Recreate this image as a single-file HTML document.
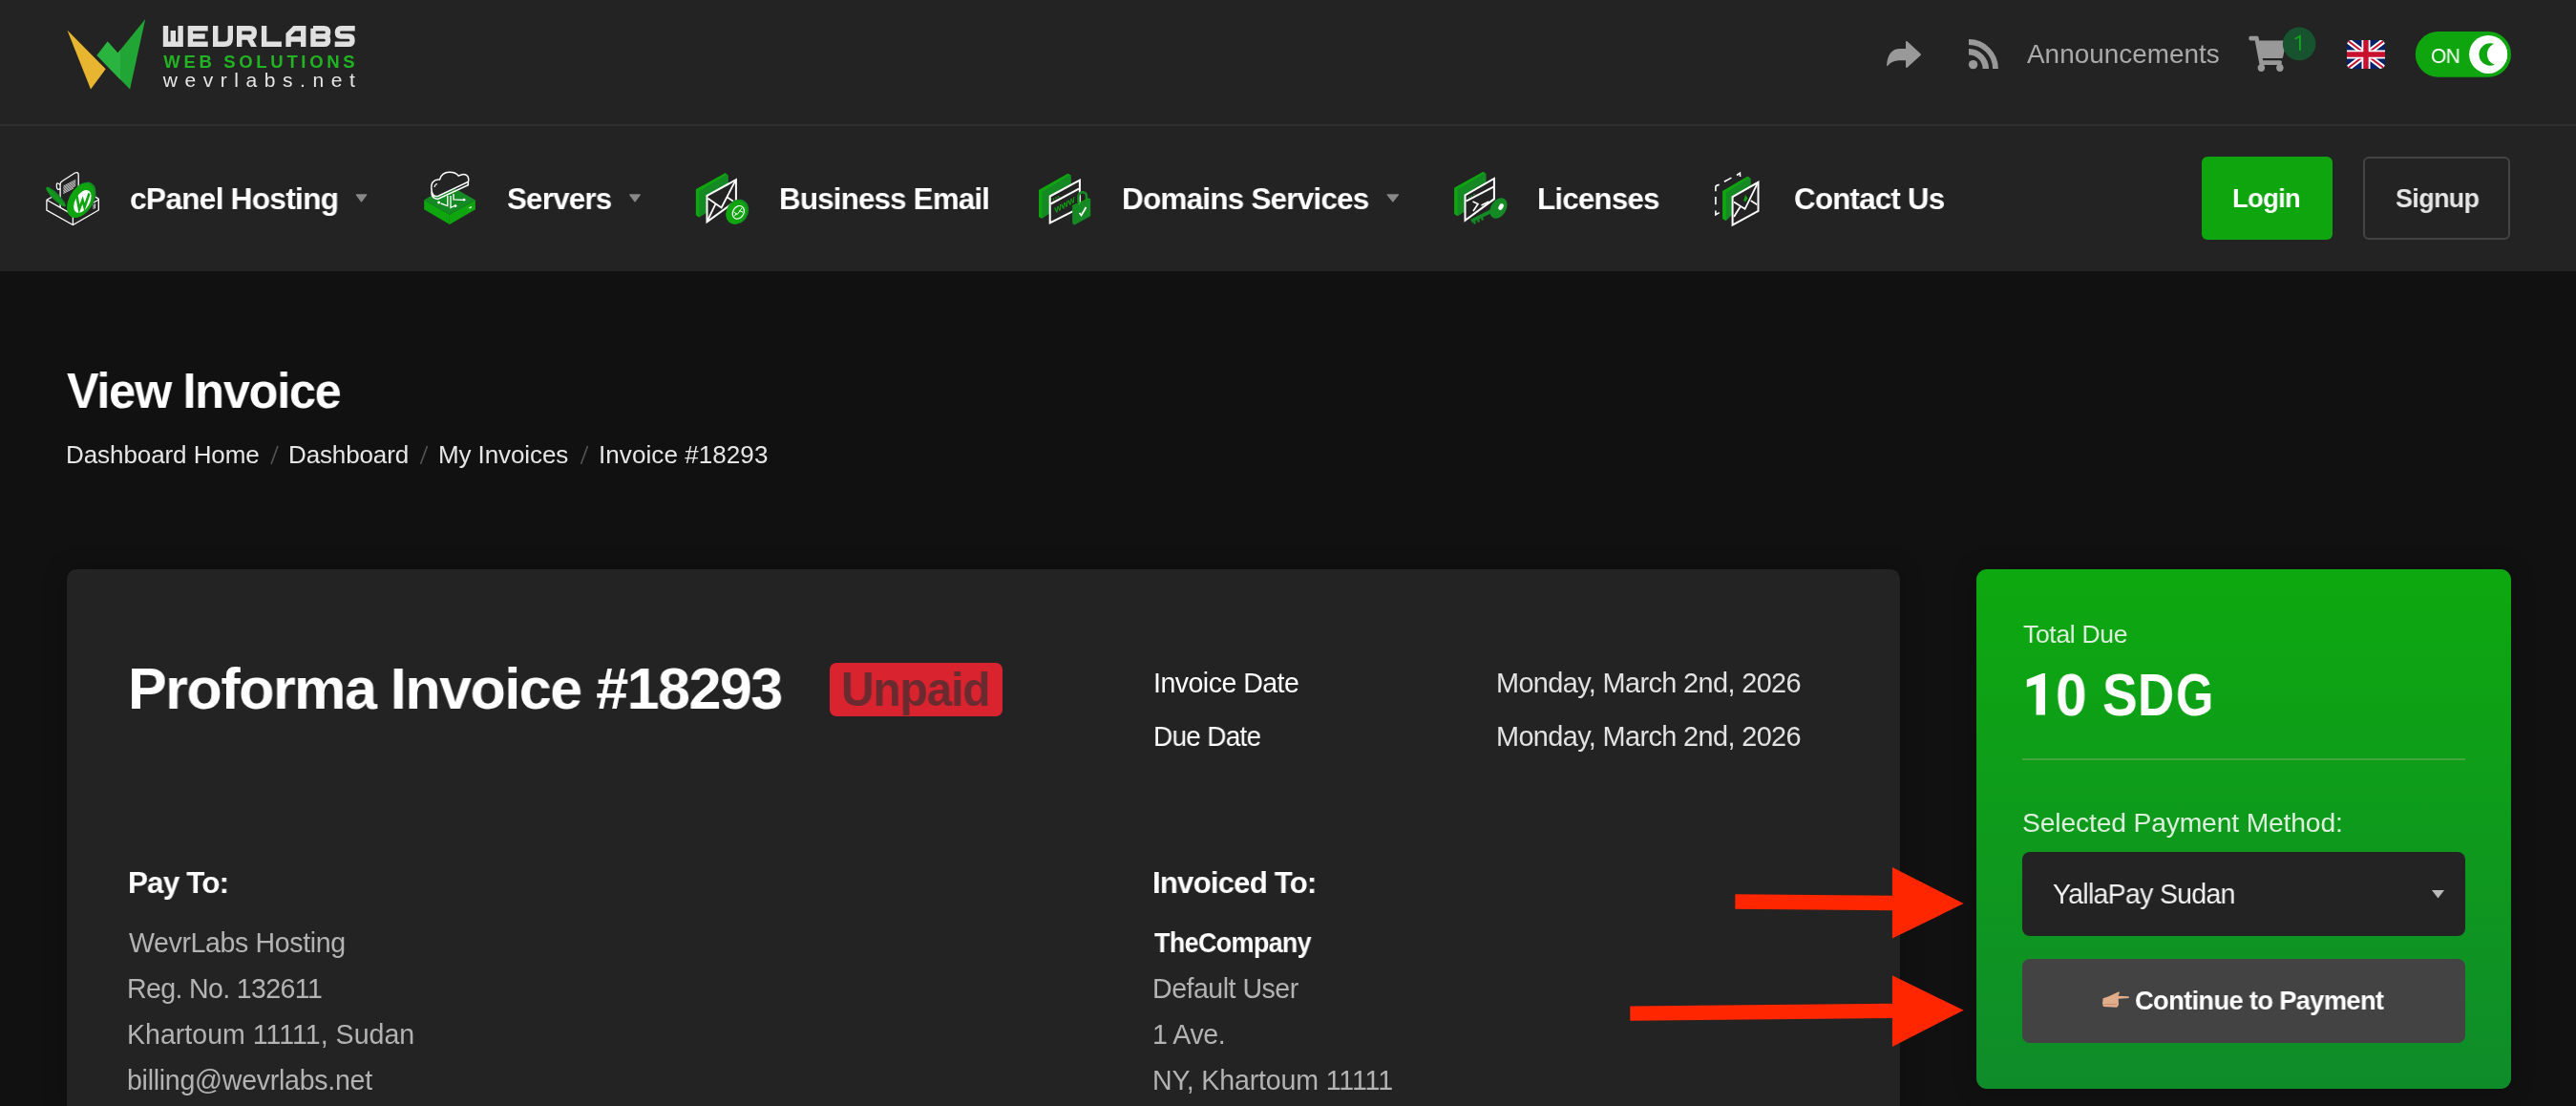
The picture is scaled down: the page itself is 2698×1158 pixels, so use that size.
<!DOCTYPE html>
<html><head><meta charset="utf-8"><style>
*{box-sizing:border-box}
html,body{margin:0;padding:0}
html{width:2698px;height:1158px;overflow:hidden;background:#111111}
body{width:2698px;height:1158px;overflow:hidden;background:#111111;position:relative;font-family:"Liberation Sans",sans-serif}
.t{position:absolute;white-space:pre;line-height:1;will-change:transform}
.abs{position:absolute}
</style></head><body>
<div class="abs" style="left:0;top:0;width:2698px;height:130px;background:#232323"></div>
<div class="abs" style="left:0;top:130px;width:2698px;height:2px;background:#2e2e2e"></div>
<div class="abs" style="left:0;top:132px;width:2698px;height:152px;background:#232323"></div>

<div class="abs" style="left:70px;top:596px;width:1920px;height:562px;background:#232323;border-radius:10px 10px 0 0;box-shadow:0 0 24px rgba(0,0,0,0.25)"></div>
<div class="abs" style="left:2070px;top:596px;width:560px;height:544px;border-radius:11px;background:linear-gradient(180deg,#0da80f 0%,#0e9a1c 50%,#0f8c2a 100%);box-shadow:0 0 24px rgba(0,0,0,0.25)"></div>
<div class="abs" style="left:2118px;top:794px;width:464px;height:2px;background:#46a63e"></div>
<div class="abs" style="left:2118px;top:892px;width:464px;height:88px;background:#232323;border-radius:8px"></div>
<div class="abs" style="left:2118px;top:1004px;width:464px;height:88px;background:#434343;border-radius:8px"></div>
<div class="abs" style="left:869px;top:694px;width:181px;height:56px;background:#d9232f;border-radius:7px"></div>
<div class="abs" style="left:2306px;top:164px;width:137px;height:87px;background:#0ea50e;border-radius:6px"></div>
<div class="abs" style="left:2475px;top:164px;width:154px;height:87px;border:2px solid #444;border-radius:6px"></div>

<svg class="abs" style="left:0;top:0;will-change:transform" width="2698" height="1158" viewBox="0 0 2698 1158">
 <!-- logo icon -->
 <polygon points="70.4,31.5 110.7,72.3 95,93.4" fill="#e8b530"/>
 <polygon points="101.5,58 112.7,43.4 123.4,55.4 152.2,20 136.1,93.4" fill="#21a535"/>
 <polygon points="101.5,58 112.7,43.4 123.4,55.4 126.1,52.1 126.1,83.5" fill="#2bb33f"/>
 <!-- logo text -->
 <g fill="none" stroke="#e0e0e0" stroke-width="5.4" stroke-linejoin="miter"><path transform="translate(170.8,27)" d="M2.7,0 V19.3 H18.3 V0 M10.5,5 V19.3"/><path transform="translate(196.7,27)" d="M21,2.7 H2.7 V19.3 H21 M2.7,11 H18"/><path transform="translate(223,27)" d="M2.7,0 V19.3 H12 Q18.3,19.3 18.3,13 V0"/><path transform="translate(248,27)" d="M2.7,22 V2.7 H14 Q18.3,2.7 18.3,7 Q18.3,12 14,12 H2.7"/><polygon transform="translate(248,27)" fill="#e0e0e0" stroke="none" points="9.5,12 15.5,12 21,22 15,22"/><path transform="translate(273.9,27)" d="M2.7,0 V19.3 H21"/><path transform="translate(299.4,27)" d="M2.7,22 V9 L9,2.7 H18.3 V22 M2.7,14 H18.3"/><path transform="translate(325.3,27)" d="M2.7,2.7 H14 Q18.3,2.7 18.3,6.8 Q18.3,11 14,11 H2.7 M2.7,11 H14 Q18.3,11 18.3,15.2 Q18.3,19.3 14,19.3 H2.7 V2.7"/><path transform="translate(350.7,27)" d="M21,2.7 H6.5 Q2.7,2.7 2.7,6.8 Q2.7,11 6.5,11 H14.5 Q18.3,11 18.3,15.2 Q18.3,19.3 14.5,19.3 H0"/></g>
 <text x="171.3" y="71" font-family="Liberation Sans" font-weight="700" font-size="18.5" fill="#22b322" textLength="200.3" lengthAdjust="spacing">WEB SOLUTIONS</text>
 <text x="170.8" y="91.4" font-family="Liberation Sans" font-weight="400" font-size="21" fill="#e6e6e6" textLength="201" lengthAdjust="spacing">wevrlabs.net</text>

 <!-- nav carets -->
 <polygon points="373.4,203.9 383.7,203.9 378.5,210.8" fill="#888" stroke="#888" stroke-width="1.4" stroke-linejoin="round"/>
 <polygon points="659.8,203.9 670.2,203.9 665,210.8" fill="#888" stroke="#888" stroke-width="1.4" stroke-linejoin="round"/>
 <polygon points="1453.2,203.9 1464.4,203.9 1458.8,210.8" fill="#888" stroke="#888" stroke-width="1.4" stroke-linejoin="round"/>
 <!-- select caret -->
 <polygon points="2547,932 2560,932 2553.5,940.5" fill="#bbb"/>
 <!-- breadcrumb slashes -->
 <g stroke="#555" stroke-width="1.6">
  <line x1="284" y1="486" x2="291" y2="467"/>
  <line x1="440.5" y1="486" x2="447.5" y2="467"/>
  <line x1="608.5" y1="486" x2="615.5" y2="467"/>
 </g>
 
 <!-- share -->
 <path d="M1996,51 L1996,44.5 Q1996,42.3 1997.8,43.6 L2011.5,56.2 Q2012.5,57.1 2011.5,58 L1997.8,70.5 Q1996,71.9 1996,69.6 L1996,63.2 L1989,63.2 Q1981.5,63.4 1977.5,68.6 Q1976,70.2 1976.1,67.8 Q1977.5,51.2 1990,51 Z" fill="#999"/>
 <!-- rss -->
 <circle cx="2066.6" cy="67.6" r="4.7" fill="#999"/>
 <path d="M2062,54.2 A17.8,17.8 0 0 1 2079.8,72" fill="none" stroke="#999" stroke-width="6.4"/>
 <path d="M2062,44 A28,28 0 0 1 2090,72" fill="none" stroke="#999" stroke-width="5.8"/>
 <!-- cart -->
 <path transform="translate(2355.4,37.8) scale(0.0676,0.0726)" fill="#999" d="M528.12 301.319l47.273-208C578.806 78.301 567.391 64 551.99 64H159.208l-9.166-44.81C147.758 8.021 137.93 0 126.529 0H24C10.745 0 0 10.745 0 24v16c0 13.255 10.745 24 24 24h69.883l70.248 343.435C147.325 417.1 136 435.222 136 456c0 30.928 25.072 56 56 56s56-25.072 56-56c0-15.674-6.447-29.835-16.824-40h209.647C430.447 426.165 424 440.326 424 456c0 30.928 25.072 56 56 56s56-25.072 56-56c0-22.172-12.888-41.332-31.579-50.405l5.517-24.276c3.413-15.018-8.002-29.319-23.403-29.319H218.117l-6.545-32h293.145c11.206 0 20.92-7.754 23.403-18.681z"/>
 <circle cx="2408.1" cy="45.9" r="17.3" fill="#17532f"/>
 <path d="M2403.8,40.8 L2408.9,37.8 V52.8" fill="none" stroke="#13a51f" stroke-width="1.9"/>
 <!-- flag -->
 <defs><clipPath id="fc"><rect x="2458" y="42" width="40" height="30" rx="5"/></clipPath></defs>
 <g clip-path="url(#fc)">
  <rect x="2458" y="42" width="40" height="30" fill="#012169"/>
  <path d="M2453,38 L2503,76 M2503,38 L2453,76" stroke="#fff" stroke-width="6"/>
  <path d="M2453,38 L2478,57 M2503,76 L2478,57 M2503,38 L2478,57 M2453,76 L2478,57" stroke="#c8102e" stroke-width="2"/>
  <path d="M2478,42 V72 M2458,57 H2498" stroke="#fff" stroke-width="9"/>
  <path d="M2478,42 V72 M2458,57 H2498" stroke="#c8102e" stroke-width="5.4"/>
 </g>
 <!-- toggle -->
 <rect x="2529.8" y="33" width="100.2" height="47.8" rx="23.9" fill="#0ea50e"/>
 <circle cx="2606.1" cy="56.9" r="20" fill="#fff"/>
 <circle cx="2608.2" cy="57" r="11.75" fill="#0ea50e"/>
 <defs><clipPath id="kc"><circle cx="2606.1" cy="56.9" r="20"/></clipPath></defs><circle cx="2616.65" cy="56.75" r="11.75" fill="#fff" clip-path="url(#kc)"/>

 <g transform="translate(44,176)">
  <path d="M19.1,41 V17 Q19,14.8 21,13.8 L34.5,5 Q38.2,3.6 38.2,7.2 V30" fill="none" stroke="#ffffff" stroke-width="1.3"/>
  <path d="M19.1,17.5 Q16,15 15.4,16.5 Q15,21 16.5,22.3 Q18,22.5 19.1,21.5" fill="none" stroke="#ffffff" stroke-width="1.2"/>
  <path d="M22.3,19.1 L35.3,12.4 M22.3,20.6 L35.3,13.9 M22.3,22.1 L35.3,15.4 M22.3,23.6 L35.3,16.9 M22.3,25.1 L35.3,18.4 M22.3,26.6 L33,21" stroke="#ffffff" stroke-width="0.75"/>
  <path d="M4.9,33.3 L32.4,48.9 L59.3,33 M4.9,33.3 V44 L32.4,59.6 L59.3,44 V32.1 M4.9,33.3 L11,30 M59.3,32.1 L53,28.6 M32.4,48.9 V59.6" fill="none" stroke="#ffffff" stroke-width="1.3"/>
  <path d="M54,38 V43 M55.5,37.2 V42.2" stroke="#ffffff" stroke-width="0.8"/>
  <ellipse cx="14.5" cy="30" rx="14" ry="3.6" transform="rotate(45 14.5 30)" fill="#158a24"/>
  <path d="M5,21 L24,40" stroke="#0ea50e" stroke-width="1.2"/>
  <ellipse cx="41.8" cy="33" rx="12.4" ry="20" transform="rotate(30 41.8 33)" fill="#158a24"/>
  <ellipse cx="40.2" cy="34" rx="11.8" ry="19.6" transform="rotate(30 40.2 34)" fill="#0ea50e"/>
  <ellipse cx="42.4" cy="34.9" rx="7.5" ry="13" transform="rotate(30 42.4 34.9)" fill="#ffffff"/>
  <path d="M36.5,29.5 L39,43 L42.5,33.5 L44.5,41 L49.5,26.5" fill="none" stroke="#0ea50e" stroke-width="2.6"/>
</g><g>
  <polygon points="444.2,209.3 444.2,219.3 470.9,235 470.9,224.5" fill="#0ea50e"/>
  <polygon points="470.9,224.5 470.9,235 497.9,219.3 497.9,209.6" fill="#0ea50e"/>
  <polygon points="444.2,209.3 470.9,194.1 497.9,209.6 470.9,224.5" fill="#158a24"/>
  <path d="M468.8,205 V215.5 L461.5,212.8 M472,205 V217.5 L476,215.5 M475,203 V208.8 L485,209.3" fill="none" stroke="#ffffff" stroke-width="1.3"/>
  <circle cx="459.6" cy="212" r="1.4" fill="#ffffff"/><circle cx="477" cy="215.6" r="1.4" fill="#ffffff"/><circle cx="486" cy="209.2" r="1.4" fill="#ffffff"/>
  <path d="M491.5,217.8 L493.8,216.6" stroke="#ffffff" stroke-width="1.3"/>
  <path d="M452,200.5 Q451.5,207.5 458.5,208.5 L490.3,193.8 V189" fill="none" stroke="#ffffff" stroke-width="1.5"/>
  <path d="M452.2,200 Q451,193.5 453.5,190.5 Q456,187.5 460.5,188 Q462.5,180.5 470.5,180.3 Q477.5,180.2 480.2,184.2 Q486.5,180.5 489.8,184.5 Q491.5,188 490.2,190.5 L459,205.2 Q453,206.5 452.2,200 Z" fill="#232323" stroke="#ffffff" stroke-width="1.5"/>
  <path d="M455,196 Q455.5,193 458,192.5" fill="none" stroke="#ffffff" stroke-width="1.1"/>
</g><g transform="translate(722,176)">
  <polygon points="6.9,22.3 37.6,5.2 40.8,7.5 40.8,33 10.4,51.5 6.9,49.2" fill="#158a24"/>
  <polygon points="6.9,22.3 37.6,5.2 39.5,6.5 10.4,24 10.4,51.5 6.9,49.2" fill="#0ea50e"/>
  <polygon points="18.5,28.9 48.9,12.2 48.9,34.1 18.5,56.4" fill="#232323" stroke="#ffffff" stroke-width="2"/>
  <path d="M19.5,31.8 L33.6,41.4 L48,13.6 M19.5,54 L27.2,38.2 M40,30.7 L46,34.7" fill="none" stroke="#ffffff" stroke-width="1.8"/>
  <ellipse cx="50.3" cy="45.7" rx="11.2" ry="13.6" transform="rotate(32 50.3 45.7)" fill="#158a24"/>
  <ellipse cx="49.3" cy="46.5" rx="10.2" ry="12.8" transform="rotate(32 49.3 46.5)" fill="#0ea50e"/>
  <ellipse cx="51.3" cy="46.3" rx="5.6" ry="7.2" transform="rotate(32 51.3 46.3)" fill="none" stroke="#ffffff" stroke-width="1.2"/>
  <path d="M46.5,45.8 L50.2,48.6 L55,41.8 M47.2,50.5 L49.3,47.2 M52.6,44.7 L56,46.2" fill="none" stroke="#ffffff" stroke-width="1"/>
</g><g transform="translate(1082,176)">
  <polygon points="6.1,23.1 36.5,5.8 39.9,7.5 39.9,33.6 9.3,52.7 6.1,50.9" fill="#158a24"/>
  <polygon points="6.1,23.1 36.5,5.8 38.5,7 9.3,25 9.3,52.7 6.1,50.9" fill="#0ea50e"/>
  <polygon points="17.7,29.5 48.9,12.7 48.9,41.7 17.7,57.3" fill="#232323" stroke="#ffffff" stroke-width="2"/>
  <path d="M18.5,37.5 L48,21.7" stroke="#ffffff" stroke-width="2"/>
  <circle cx="21.5" cy="32.5" r="0.9" fill="#0ea50e"/><circle cx="24" cy="31.2" r="0.9" fill="#0ea50e"/><circle cx="26.5" cy="29.9" r="0.9" fill="#0ea50e"/>
  <text transform="translate(23.5,47) matrix(1,-0.55,0.35,1,0,0)" font-family="Liberation Sans" font-style="italic" font-weight="700" font-size="9.5" fill="#0ea50e" textLength="21" lengthAdjust="spacingAndGlyphs">www</text>
  <path d="M47.5,36 V30 Q48,25 52.5,25.2 Q56.5,25.8 56,31 V33" fill="none" stroke="#158a24" stroke-width="2.6"/>
  <polygon points="41.1,40.5 60.2,32.4 60.2,50.3 43.4,59.6 41.1,57.9" fill="#158a24"/>
  <polygon points="41.1,40.5 60.2,32.4 58.5,31.5 41.1,39" fill="#0ea50e"/>
  <path d="M48.5,47 L50.5,49.5 L55.5,41" fill="none" stroke="#ffffff" stroke-width="1.8"/>
</g><g transform="translate(1518,176)">
  <polygon points="5.2,20.8 35.3,4.1 38.5,5.8 38.5,31.3 8.7,50.3 5.2,48" fill="#158a24"/>
  <polygon points="5.2,20.8 35.3,4.1 37,5 8.7,22.5 8.7,50.3 5.2,48" fill="#0ea50e"/>
  <polygon points="16.5,28.4 46.9,11 46.9,32.4 16.5,54.7" fill="#232323" stroke="#ffffff" stroke-width="2"/>
  <path d="M17.4,34.7 L46.3,19.7" stroke="#ffffff" stroke-width="2"/>
  <circle cx="20.5" cy="30.5" r="0.8" fill="#0ea50e"/><circle cx="23" cy="29.2" r="0.8" fill="#0ea50e"/><circle cx="26" cy="27.6" r="0.8" fill="#0ea50e"/>
  <path d="M24.5,35 L30,37.5 L25,45 M33.5,39 L41.5,35" fill="none" stroke="#ffffff" stroke-width="1.6"/>
  <path d="M23,55.5 L46,44" stroke="#158a24" stroke-width="4"/>
  <path d="M26,56 L27,58.5 M30,54 L31,56.5 M34,52 L35,54.5" stroke="#158a24" stroke-width="2.4"/>
  <ellipse cx="51.5" cy="42" rx="8" ry="11.5" transform="rotate(32 51.5 42)" fill="#158a24"/>
  <ellipse cx="54.1" cy="40.5" rx="2.3" ry="3.6" transform="rotate(32 54.1 40.5)" fill="#ffffff"/>
</g><g transform="translate(1790,176)">
  <path d="M6.9,24.3 V19.7 Q6.9,18.2 10.7,17.4 M15.9,14.2 L23.4,10.1 M29,7.5 L32.4,5.2 L32.6,9 M6.9,30.1 V38.2 M6.9,44.6 V48.9 L10.7,46.6" fill="none" stroke="#ffffff" stroke-width="1.6"/>
  <polygon points="14.2,24 40.5,8.7 43.7,10.7 43.7,30 17.9,55 14.2,53" fill="#158a24"/>
  <polygon points="14.2,24 40.5,8.7 42,9.6 17.9,26 17.9,55 14.2,53" fill="#0ea50e"/>
  <polygon points="24.6,30.1 51.5,14.8 51.5,44.8 24.6,59.6" fill="#232323" stroke="#ffffff" stroke-width="2"/>
  <path d="M26,35.6 L37.6,42.8 L50.3,16.8 M26,50.9 L33,39.9 M43.7,34.1 L50.3,38.2" fill="none" stroke="#ffffff" stroke-width="1.8"/>
  <path d="M38,28 L37,32 L36,33.5 Q37,35.5 38.5,35 L40.5,31.5 Z" fill="#0ea50e"/>
</g>
 <path d="M2202.6,1045.2 L2208.6,1043.3 L2219.2,1038.2 Q2220.5,1039.5 2219.5,1040.6 L2218.4,1042.7 L2229.3,1043.2 Q2230.6,1044.1 2229.6,1045 L2218.7,1045.8 L2219,1052.2 L2217.2,1054.7 L2203.2,1054 Q2201.8,1052 2202.1,1050.3 Z" fill="#e2ad8a"/>
<path d="M2203.5,1051.5 H2217.5" stroke="#c98f6e" stroke-width="1"/>
 <polygon points="2142,705 2142,748.5 2132.6,748.5 2132.6,716.2 2122.8,719.6 2122.8,711.6 2139.3,705" fill="#fff"/>
 <!-- red arrows -->
 <polygon points="1817.3,936.2 1981.9,937.8 1981.9,907.9 2056.7,946.1 1981.9,982.5 1981.9,953.3 1817.3,951.7" fill="#ff2600"/>
 <polygon points="1707.3,1053.5 1981.9,1050.8 1981.9,1021.3 2056.7,1057.7 1981.9,1095.9 1981.9,1066.1 1707.3,1068.7" fill="#ff2600"/>
</svg>
<div class="t" id="viewinv" style="left:70.00px;top:384.00px;font-size:51.43px;font-weight:700;color:#ffffff;letter-spacing:-1.286px;transform:scaleX(0.9799);transform-origin:0 0">View Invoice</div><div class="t" id="bc1" style="left:69.00px;top:462.80px;font-size:26.0px;font-weight:400;color:#e6e6e6;letter-spacing:-0.077px">Dashboard Home</div><div class="t" id="bc2" style="left:302.00px;top:462.80px;font-size:26.0px;font-weight:400;color:#e6e6e6;letter-spacing:-0.125px">Dashboard</div><div class="t" id="bc3" style="left:459.00px;top:462.80px;font-size:26.0px;font-weight:400;color:#e6e6e6;letter-spacing:-0.100px">My Invoices</div><div class="t" id="bc4" style="left:627.00px;top:462.80px;font-size:26.0px;font-weight:400;color:#e6e6e6;letter-spacing:0.077px">Invoice #18293</div><div class="t" id="title" style="left:133.74px;top:690.20px;font-size:61.71px;font-weight:700;color:#ffffff;letter-spacing:-1.543px;transform:scaleX(0.9902);transform-origin:0 0">Proforma Invoice #18293</div><div class="t" id="unpaid" style="left:881.16px;top:696.80px;font-size:50.71px;font-weight:700;color:#6a2b30;letter-spacing:-1.268px;transform:scaleX(0.9458);transform-origin:0 0">Unpaid</div><div class="t" id="invdate" style="left:1207.50px;top:701.00px;font-size:28.57px;font-weight:400;color:#ffffff;letter-spacing:-0.536px">Invoice Date</div><div class="t" id="duedate" style="left:1207.54px;top:757.00px;font-size:28.57px;font-weight:400;color:#ffffff;letter-spacing:-0.714px;transform:scaleX(0.9779);transform-origin:0 0">Due Date</div><div class="t" id="date1" style="left:1566.60px;top:701.20px;font-size:28.86px;font-weight:400;color:#e2e2e2;letter-spacing:-0.618px">Monday, March 2nd, 2026</div><div class="t" id="date2" style="left:1566.60px;top:757.20px;font-size:28.86px;font-weight:400;color:#e2e2e2;letter-spacing:-0.618px">Monday, March 2nd, 2026</div><div class="t" id="payto" style="left:133.52px;top:909.00px;font-size:31.71px;font-weight:700;color:#ffffff;letter-spacing:-0.793px;transform:scaleX(0.9878);transform-origin:0 0">Pay To:</div><div class="t" id="p1" style="left:134.80px;top:973.00px;font-size:28.57px;font-weight:400;color:#b3b3b3;letter-spacing:-0.387px">WevrLabs Hosting</div><div class="t" id="p2" style="left:133.00px;top:1021.00px;font-size:28.57px;font-weight:400;color:#b3b3b3;letter-spacing:-0.643px">Reg. No. 132611</div><div class="t" id="p3" style="left:133.00px;top:1069.00px;font-size:28.57px;font-weight:400;color:#b3b3b3;letter-spacing:0.000px">Khartoum 11111, Sudan</div><div class="t" id="p4" style="left:133.00px;top:1117.00px;font-size:28.57px;font-weight:400;color:#b3b3b3;letter-spacing:-0.279px">billing@wevrlabs.net</div><div class="t" id="invto" style="left:1207.34px;top:909.00px;font-size:31.71px;font-weight:700;color:#ffffff;letter-spacing:-0.793px;transform:scaleX(0.9809);transform-origin:0 0">Invoiced To:</div><div class="t" id="i1" style="left:1209.00px;top:973.00px;font-size:28.57px;font-weight:700;color:#ffffff;letter-spacing:-0.714px;transform:scaleX(0.9440);transform-origin:0 0">TheCompany</div><div class="t" id="i2" style="left:1207.00px;top:1021.00px;font-size:28.57px;font-weight:400;color:#b3b3b3;letter-spacing:-0.500px">Default User</div><div class="t" id="i3" style="left:1207.00px;top:1069.00px;font-size:28.57px;font-weight:400;color:#b3b3b3;letter-spacing:-0.460px">1 Ave.</div><div class="t" id="i4" style="left:1207.00px;top:1117.00px;font-size:28.57px;font-weight:400;color:#b3b3b3;letter-spacing:-0.147px">NY, Khartoum 11111</div><div class="t" id="totaldue" style="left:2118.70px;top:651.20px;font-size:26.5px;font-weight:400;color:#dcefdc;letter-spacing:-0.312px">Total Due</div><div class="t" id="selpm" style="left:2117.70px;top:846.80px;font-size:28.29px;font-weight:400;color:#dcefdc;letter-spacing:-0.161px">Selected Payment Method:</div><div class="t" id="yalla" style="left:2149.61px;top:921.60px;font-size:28.71px;font-weight:400;color:#f2f2f2;letter-spacing:-0.718px;transform:scaleX(0.9933);transform-origin:0 0">YallaPay Sudan</div><div class="t" id="cont" style="left:2236.40px;top:1033.80px;font-size:27.43px;font-weight:700;color:#ffffff;letter-spacing:-0.686px;transform:scaleX(0.9967);transform-origin:0 0">Continue to Payment</div><div class="t" id="n1" style="left:136.01px;top:191.80px;font-size:32.14px;font-weight:700;color:#ffffff;letter-spacing:-0.804px;transform:scaleX(0.9883);transform-origin:0 0">cPanel Hosting</div><div class="t" id="n2" style="left:530.73px;top:191.80px;font-size:32.14px;font-weight:700;color:#ffffff;letter-spacing:-0.804px;transform:scaleX(0.9741);transform-origin:0 0">Servers</div><div class="t" id="n3" style="left:816.25px;top:191.80px;font-size:32.14px;font-weight:700;color:#ffffff;letter-spacing:-0.804px;transform:scaleX(0.9732);transform-origin:0 0">Business Email</div><div class="t" id="n4" style="left:1175.44px;top:191.80px;font-size:32.14px;font-weight:700;color:#ffffff;letter-spacing:-0.804px;transform:scaleX(0.9796);transform-origin:0 0">Domains Services</div><div class="t" id="n5" style="left:1610.05px;top:191.80px;font-size:32.14px;font-weight:700;color:#ffffff;letter-spacing:-0.804px;transform:scaleX(0.9737);transform-origin:0 0">Licenses</div><div class="t" id="n6" style="left:1878.63px;top:191.80px;font-size:32.14px;font-weight:700;color:#ffffff;letter-spacing:-0.804px;transform:scaleX(0.9745);transform-origin:0 0">Contact Us</div><div class="t" id="login" style="left:2338.05px;top:194.00px;font-size:28.14px;font-weight:700;color:#ffffff;letter-spacing:-0.704px;transform:scaleX(0.9731);transform-origin:0 0">Login</div><div class="t" id="signup" style="left:2508.74px;top:194.00px;font-size:28.14px;font-weight:700;color:#e6e6e6;letter-spacing:-0.704px;transform:scaleX(0.9600);transform-origin:0 0">Signup</div><div class="t" id="announce" style="left:2123.00px;top:43.00px;font-size:27.86px;font-weight:400;color:#aaaaaa;letter-spacing:0.033px">Announcements</div><div class="t" id="on" style="left:2546.32px;top:48.70px;font-size:21.29px;font-weight:400;color:#ffffff;letter-spacing:-0.532px;transform:scaleX(0.9801);transform-origin:0 0">ON</div>
<div class="t" style="left:2153.45px;top:695.50px;font-size:63.5px;font-weight:700;color:#fff;transform:scaleX(0.9226);transform-origin:0 0">0</div><div class="t" style="left:2202.17px;top:695.50px;font-size:63.5px;font-weight:700;color:#fff;transform:scaleX(0.8658);transform-origin:0 0">S</div><div class="t" style="left:2239.08px;top:695.50px;font-size:63.5px;font-weight:700;color:#fff;transform:scaleX(0.8308);transform-origin:0 0">D</div><div class="t" style="left:2278.81px;top:695.50px;font-size:63.5px;font-weight:700;color:#fff;transform:scaleX(0.7955);transform-origin:0 0">G</div>
</body></html>
